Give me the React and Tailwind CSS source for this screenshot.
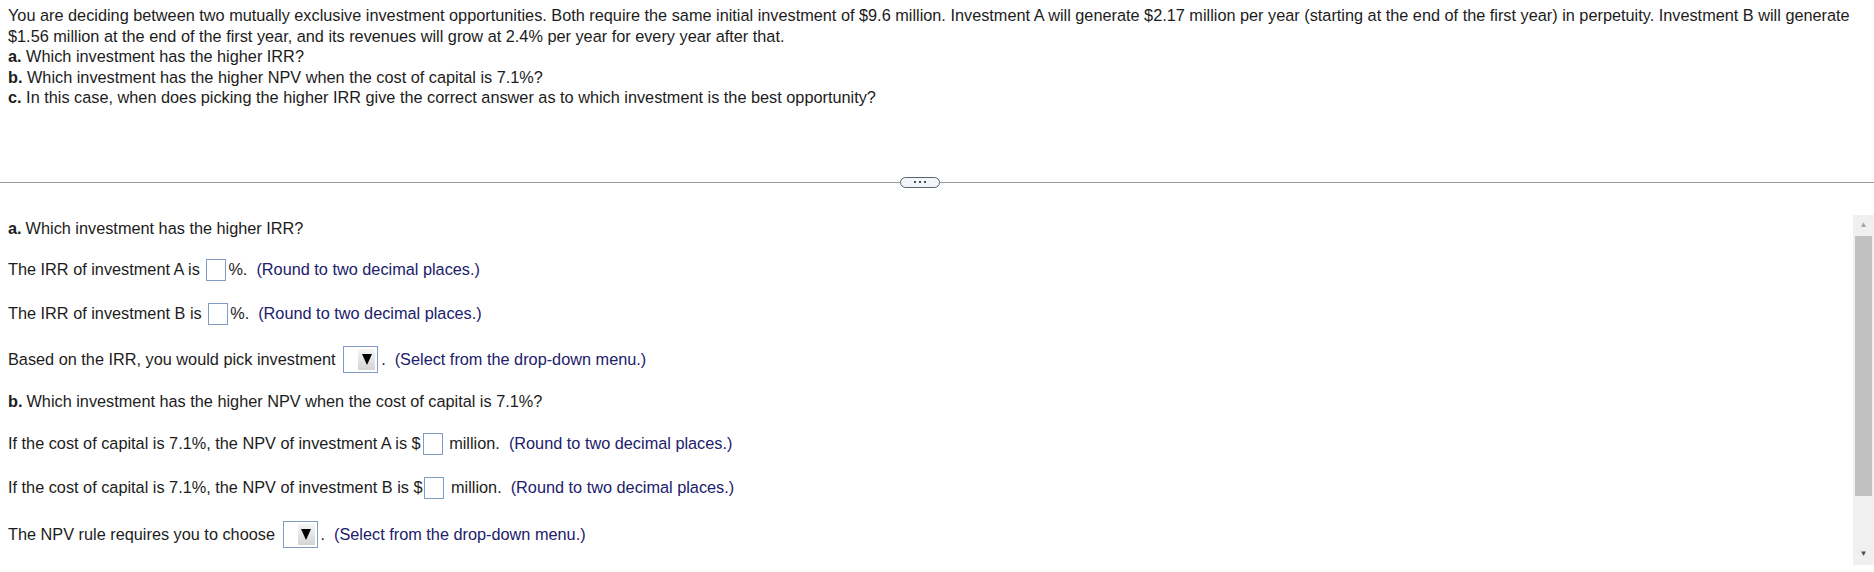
import React from "react";

function Box() {
  return <span className="inline-block w-[20px] h-[22px] border border-[#7f9cc4] bg-white mx-[2px]" />;
}

function Drop() {
  return (
    <span className="inline-flex w-[35px] h-[27px] border border-[#7f9cc4] bg-white mx-[3px] p-[2px]">
      <span className="flex-1" />
      <span className="w-[17px] h-full flex items-center justify-center bg-gradient-to-b from-[#f6f6f6] to-[#d4d4d4]">
        <svg width="10" height="11" viewBox="0 0 10 11">
          <polygon points="0,0 10,0 5,11" fill="#000" />
        </svg>
      </span>
    </span>
  );
}

function Hint({ children }) {
  return <span className="text-[#20206b] ml-[9px]">{children}</span>;
}

export default function App() {
  const font = { fontFamily: '"Liberation Sans", Arial, sans-serif' };
  return (
    <div className="w-[1874px] h-[572px] bg-white text-[#1c1c1c] text-[16.3px] overflow-hidden" style={font}>
      {/* Aufgabenstellung */}
      <div className="pl-[8px] pr-[18px] pt-[5px] leading-[20.5px]">
        <p>
          You are deciding between two mutually exclusive investment opportunities. Both require the same initial investment of $9.6 million. Investment A will generate $2.17 million per year (starting at the end of the first year) in perpetuity. Investment B will generate $1.56 million at the end of the first year, and its revenues will grow at 2.4% per year for every year after that.
        </p>
        <p><b>a.</b> Which investment has the higher IRR?</p>
        <p><b>b.</b> Which investment has the higher NPV when the cost of capital is 7.1%?</p>
        <p><b>c.</b> In this case, when does picking the higher IRR give the correct answer as to which investment is the best opportunity?</p>
      </div>

      {/* Trenner */}
      <div className="flex items-center mt-[69px] h-[11px]">
        <div className="w-[900px] border-t border-[#9a9a9a]" />
        <div className="w-[40px] h-[11px] rounded-full border border-[#5a6470] bg-[#f3f6f8] flex items-center justify-center gap-[3px]">
          <span className="w-[2px] h-[2px] bg-[#44505c]" />
          <span className="w-[2px] h-[2px] bg-[#44505c]" />
          <span className="w-[2px] h-[2px] bg-[#44505c]" />
        </div>
        <div className="flex-1 border-t border-[#9a9a9a]" />
      </div>

      {/* Antworten */}
      <div className="flex mt-[27px] h-[350px]">
        <div className="flex-1 px-[8px]">
          <div className="flex items-center h-[28px]"><b className="mr-[4px]">a.</b>Which investment has the higher IRR?</div>
          <div className="flex items-center h-[28px] mt-[13px]">
            The IRR of investment A is&nbsp;<Box />%.<Hint>(Round to two decimal places.)</Hint>
          </div>
          <div className="flex items-center h-[28px] mt-[16px]">
            The IRR of investment B is&nbsp;<Box />%.<Hint>(Round to two decimal places.)</Hint>
          </div>
          <div className="flex items-center h-[28px] mt-[18px]">
            Based on the IRR, you would pick investment&nbsp;<Drop />.<Hint>(Select from the drop-down menu.)</Hint>
          </div>
          <div className="flex items-center h-[28px] mt-[14px]"><b className="mr-[4px]">b.</b>Which investment has the higher NPV when the cost of capital is 7.1%?</div>
          <div className="flex items-center h-[28px] mt-[14px]">
            If the cost of capital is 7.1%, the NPV of investment A is $<Box />&nbsp;million.<Hint>(Round to two decimal places.)</Hint>
          </div>
          <div className="flex items-center h-[28px] mt-[16px]">
            If the cost of capital is 7.1%, the NPV of investment B is $<Box />&nbsp;million.<Hint>(Round to two decimal places.)</Hint>
          </div>
          <div className="flex items-center h-[28px] mt-[19px]">
            The NPV rule requires you to choose&nbsp;<Drop />.<Hint>(Select from the drop-down menu.)</Hint>
          </div>
        </div>

        {/* Scrollleiste */}
        <div className="w-[21px] bg-[#f0f0f0] flex flex-col items-center">
          <div className="h-[21px] flex items-center justify-center text-[8px] text-[#a3a3a3]">▲</div>
          <div className="w-[17px] h-[260px] bg-[#c1c1c1]" />
          <div className="flex-1" />
          <div className="h-[21px] flex items-center justify-center text-[8px] text-[#505050]">▼</div>
        </div>
      </div>
    </div>
  );
}
